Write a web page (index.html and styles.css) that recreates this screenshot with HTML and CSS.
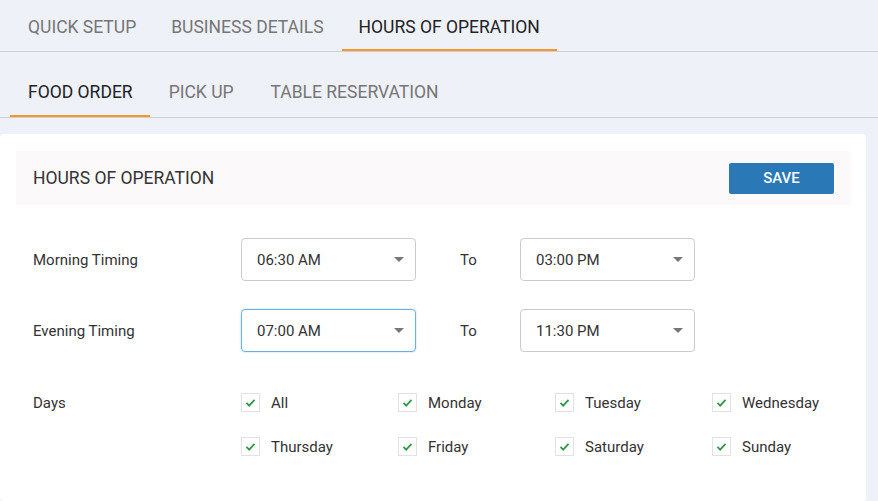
FILE: index.html
```html
<!DOCTYPE html>
<html>
<head>
<meta charset="utf-8">
<link rel="stylesheet" href="styles.css">
</head>
<body>
<nav class="tabs tabs-main">
  <div class="tab">QUICK SETUP</div>
  <div class="tab">BUSINESS DETAILS</div>
  <div class="tab active">HOURS OF OPERATION</div>
</nav>
<nav class="tabs tabs-sub">
  <div class="tab active">FOOD ORDER</div>
  <div class="tab">PICK UP</div>
  <div class="tab">TABLE RESERVATION</div>
</nav>
<section class="card">
  <header class="card-head">
    <h2 class="card-title">HOURS OF OPERATION</h2>
    <button class="btn-save">SAVE</button>
  </header>
  <div class="form">
    <div class="row">
      <div class="label">Morning Timing</div>
      <div class="select"><span>06:30 AM</span><i class="caret"></i></div>
      <div class="to">To</div>
      <div class="select"><span>03:00 PM</span><i class="caret"></i></div>
    </div>
    <div class="row">
      <div class="label">Evening Timing</div>
      <div class="select focused"><span>07:00 AM</span><i class="caret"></i></div>
      <div class="to">To</div>
      <div class="select"><span>11:30 PM</span><i class="caret"></i></div>
    </div>
    <div class="row days-row">
      <div class="label">Days</div>
      <div class="days">
        <label class="day"><span class="cb"><svg viewBox="0 0 19 19"><path d="M5 10 L8 13 L14 6.5"/></svg></span>All</label>
        <label class="day"><span class="cb"><svg viewBox="0 0 19 19"><path d="M5 10 L8 13 L14 6.5"/></svg></span>Monday</label>
        <label class="day"><span class="cb"><svg viewBox="0 0 19 19"><path d="M5 10 L8 13 L14 6.5"/></svg></span>Tuesday</label>
        <label class="day"><span class="cb"><svg viewBox="0 0 19 19"><path d="M5 10 L8 13 L14 6.5"/></svg></span>Wednesday</label>
        <label class="day"><span class="cb"><svg viewBox="0 0 19 19"><path d="M5 10 L8 13 L14 6.5"/></svg></span>Thursday</label>
        <label class="day"><span class="cb"><svg viewBox="0 0 19 19"><path d="M5 10 L8 13 L14 6.5"/></svg></span>Friday</label>
        <label class="day"><span class="cb"><svg viewBox="0 0 19 19"><path d="M5 10 L8 13 L14 6.5"/></svg></span>Saturday</label>
        <label class="day"><span class="cb"><svg viewBox="0 0 19 19"><path d="M5 10 L8 13 L14 6.5"/></svg></span>Sunday</label>
      </div>
    </div>
  </div>
</section>
</body>
</html>
```

FILE: styles.css
```css
* { box-sizing: border-box; }
html, body { margin: 0; padding: 0; }
body {
  background: #eef1f8;
  font-family: Roboto, "Liberation Sans", sans-serif;
  color: #333;
  height: 501px;
  overflow: hidden;
}
.tabs {
  display: flex;
  height: 52px;
  border-bottom: 1px solid #cfd1d6;
}
.tabs-main { padding-left: 11px; }
.tabs-sub { padding-left: 10px; margin-top: 14px; }
.tab {
  display: flex;
  align-items: center;
  padding: 3px 17px 0 17px;
  height: 51px;
  font-size: 17.5px;
  color: #767676;
  margin-right: 1px;
}
.tabs-sub .tab { padding: 1px 17px 0 18px; margin-right: 0; }
.tabs-sub .tab + .tab { padding-left: 19px; padding-right: 18px; }
.tab.active {
  color: #222;
  box-shadow: inset 0 -2px 0 #f7962b;
}
.card {
  background: #fff;
  margin: 16px 12px 0 0;
  border-radius: 4px;
  padding: 17px 15px 45px 16px;
}
.card-head {
  height: 54px;
  background: #fbf9fa;
  display: flex;
  align-items: center;
  justify-content: space-between;
  padding: 0 17px;
}
.card-title {
  margin: 0;
  font-weight: 400;
  font-size: 17.5px;
  color: #333;
}
.btn-save {
  width: 105px;
  height: 31px;
  background: #2a78b5;
  color: #fff;
  border: none;
  border-radius: 2px;
  font-family: inherit;
  font-size: 15px;
  font-weight: 500;
  padding: 0;
}
.form { padding: 33px 17px 0 17px; }
.row {
  display: flex;
  align-items: center;
  height: 43px;
  margin-bottom: 28px;
}
.label {
  width: 208px;
  flex-shrink: 0;
  font-size: 15px;
  color: #333;
}
.select {
  width: 175px;
  flex-shrink: 0;
  height: 43px;
  border: 1px solid #cccccc;
  border-radius: 4px;
  display: flex;
  align-items: center;
  justify-content: space-between;
  padding: 0 11px 0 15px;
  font-size: 15px;
  color: #333;
}
.select.focused {
  border-color: #66afe9;
  box-shadow: 0 0 2px rgba(102,175,233,0.5);
}
.caret {
  width: 0;
  height: 0;
  border-left: 5px solid transparent;
  border-right: 5px solid transparent;
  border-top: 5px solid #777;
}
.to {
  width: 104px;
  flex-shrink: 0;
  padding-left: 44px;
  font-size: 15px;
  color: #333;
}
.days-row {
  height: auto;
  align-items: flex-start;
  margin-top: 41px;
  margin-bottom: 0;
}
.days-row .label { line-height: 20px; }
.days {
  display: grid;
  grid-template-columns: 157px 157px 157px auto;
  row-gap: 25px;
}
.day {
  display: flex;
  align-items: center;
  height: 19px;
  font-size: 15px;
  color: #333;
}
.cb {
  width: 19px;
  height: 19px;
  border: 1px solid #e2e2e2;
  margin-right: 11px;
  display: block;
}
.cb svg {
  display: block;
  width: 17px;
  height: 17px;
  fill: none;
  stroke: #2e9a48;
  stroke-width: 2;
}
```
